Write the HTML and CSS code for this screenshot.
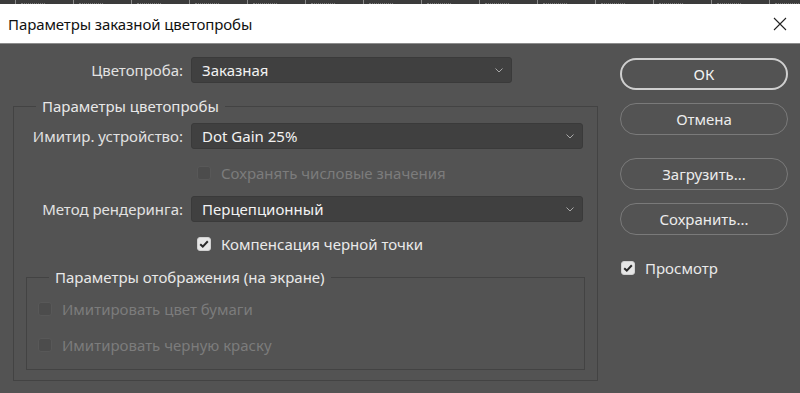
FILE: index.html
```html
<!DOCTYPE html>
<html lang="ru">
<head>
<meta charset="utf-8">
<link rel="stylesheet" href="styles.css">
</head>
<body>
<div class="ruler">
  <span class="tick"></span><span class="tick"></span><span class="tick"></span><span class="tick"></span><span class="tick"></span><span class="tick"></span><span class="tick"></span><span class="tick"></span><span class="tick"></span><span class="tick"></span><span class="tick"></span><span class="tick"></span><span class="tick"></span><span class="tick"></span>
</div>
<div class="titlebar">
  <span class="title">Параметры заказной цветопробы</span>
  <svg class="close" width="14" height="14" viewBox="0 0 14 14"><path d="M1 1L13 13M13 1L1 13" stroke="#222" stroke-width="1.1" fill="none"/></svg>
</div>
<div class="dialog">
  <div class="left">
    <div class="row top-row">
      <label class="lbl">Цветопроба:</label>
      <div class="select s-short">Заказная<svg class="chev" width="8" height="5" viewBox="0 0 8 5"><path d="M0.5 0.5L4 4L7.5 0.5" stroke="#a8a8a8" fill="none"/></svg></div>
    </div>
    <fieldset class="group g1">
      <legend>Параметры цветопробы</legend>
      <div class="grid">
        <label class="lbl">Имитир. устройство:</label>
        <div class="select">Dot Gain 25%<svg class="chev" width="8" height="5" viewBox="0 0 8 5"><path d="M0.5 0.5L4 4L7.5 0.5" stroke="#a8a8a8" fill="none"/></svg></div>
        <span></span>
        <div class="check disabled"><span class="box"></span>Сохранять числовые значения</div>
        <label class="lbl">Метод рендеринга:</label>
        <div class="select">Перцепционный<svg class="chev" width="8" height="5" viewBox="0 0 8 5"><path d="M0.5 0.5L4 4L7.5 0.5" stroke="#a8a8a8" fill="none"/></svg></div>
        <span></span>
        <div class="check"><span class="box on"><svg width="10" height="8" viewBox="0 0 10 8"><path d="M1.2 4.2L3.8 6.6L8.8 1.2" stroke="#2a2a2a" stroke-width="2" fill="none"/></svg></span>Компенсация черной точки</div>
      </div>
      <fieldset class="group g2">
        <legend>Параметры отображения (на экране)</legend>
        <div class="check disabled c-paper"><span class="box"></span>Имитировать цвет бумаги</div>
        <div class="check disabled c-ink"><span class="box"></span>Имитировать черную краску</div>
      </fieldset>
    </fieldset>
  </div>
  <div class="right">
    <button class="btn primary">ОК</button>
    <button class="btn">Отмена</button>
    <button class="btn b-load">Загрузить...</button>
    <button class="btn">Сохранить...</button>
    <div class="check preview"><span class="box on"><svg width="10" height="8" viewBox="0 0 10 8"><path d="M1.2 4.2L3.8 6.6L8.8 1.2" stroke="#2a2a2a" stroke-width="2" fill="none"/></svg></span>Просмотр</div>
  </div>
</div>
</body>
</html>
```
FILE: styles.css
```css
* { box-sizing: border-box; }
html, body { margin: 0; padding: 0; }
body {
  width: 800px;
  height: 393px;
  overflow: hidden;
  background: #535353;
  font-family: "Noto Sans", "Open Sans", sans-serif;
  font-size: 15px;
  color: #e6e6e6;
}
.ruler {
  height: 4px;
  background: #3b3b3b;
  overflow: hidden;
  display: flex;
  padding-left: 15px;
}
.tick {
  flex: 0 0 58px;
  border-left: 1px solid #8a8a8a;
}
.tick::after {
  content: "";
  display: block;
  margin: 1px 0 0 5px;
  width: 24px;
  height: 2px;
  border-bottom: 1px dotted #7a7a7a;
}
.titlebar {
  height: 40px;
  background: #ffffff;
  border-bottom: 1px solid #8c8c8c;
  display: flex;
  align-items: center;
  justify-content: space-between;
  padding: 0 13px 0 8px;
}
.title {
  color: #111;
  font-size: 15px;
  letter-spacing: -0.1px;
}
.dialog {
  display: flex;
  padding-top: 13px;
}
.left {
  width: 605px;
}
.row {
  display: flex;
  align-items: center;
  gap: 8px;
}
.lbl {
  color: #e2e2e2;
  text-align: right;
  white-space: nowrap;
}
.top-row .lbl { width: 183px; }
.select {
  height: 26px;
  background: #404040;
  border: 1px solid #3a3a3a;
  border-radius: 3px;
  display: flex;
  align-items: center;
  justify-content: space-between;
  padding: 0 8px 0 10px;
  color: #f2f2f2;
  width: 392px;
}
.select.s-short { width: 321px; }
.chev { margin-top: 1px; }
.group {
  border: 1px solid #434343;
  margin: 0;
  padding: 0;
}
.group legend {
  color: #e8e8e8;
  padding: 0 6px;
  line-height: 20px;
}
.g1 {
  margin: 13px 0 0 13px;
  width: 585px;
  height: 285px;
}
.g1 legend { margin-left: 22px; }
.grid {
  display: grid;
  grid-template-columns: 169px 392px;
  column-gap: 8px;
  align-items: center;
  grid-template-rows: 26px 47px 26px 44px;
  margin-top: 7px;
}
.check {
  display: flex;
  align-items: center;
  color: #eaeaea;
  padding-left: 6px;
  white-space: nowrap;
}
.check .box {
  flex: 0 0 14px;
  width: 14px;
  height: 14px;
  border-radius: 3px;
  margin-right: 10px;
  background: #4c4c4c;
  border: 1px solid #585858;
  display: flex;
  align-items: center;
  justify-content: center;
}
.check .box.on {
  background: #e6e6e6;
  border-color: #d0d0d0;
}
.check.disabled { color: #7c7c7c; }
.g2 {
  margin: 1px 0 0 12px;
  width: 559px;
  height: 103px;
}
.g2 legend { margin-left: 22px; }
.g2 .check { padding-left: 11px; }
.c-paper { margin-top: 12px; }
.c-ink { margin-top: 16px; }
.right {
  display: flex;
  flex-direction: column;
  padding-left: 15px;
  padding-top: 1px;
}
.btn {
  width: 168px;
  height: 32px;
  border-radius: 16px;
  background: transparent;
  border: 1.5px solid #7a7a7a;
  color: #ececec;
  font-family: inherit;
  font-size: 15px;
  margin-bottom: 13px;
}
.btn.primary {
  border: 2px solid #cfcfcf;
  color: #f4f4f4;
}
.b-load { margin-top: 10px; }
.preview { padding-left: 1px; margin-top: 10px; }
```
